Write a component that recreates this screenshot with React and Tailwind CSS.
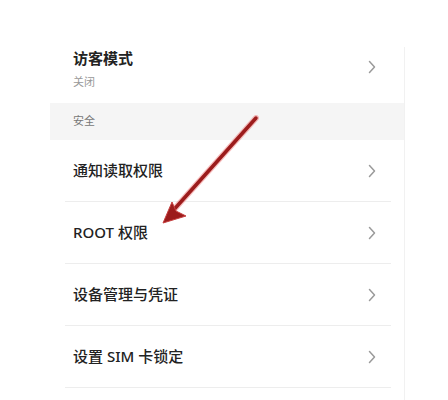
import React from 'react';

const Chevron = ({ className = '' }) => (
  <svg width="8" height="14" viewBox="0 0 8 14" className={`shrink-0 ${className}`}>
    <path d="M1.5 1.5 L6.5 7 L1.5 12.5" fill="none" stroke="#9a9a9a" strokeWidth="1.5" strokeLinecap="round" strokeLinejoin="round" />
  </svg>
);

const rows = ['通知读取权限', 'ROOT 权限', '设备管理与凭证', '设置 SIM 卡锁定'];

export default function App() {
  return (
    <div
      className="relative w-[448px] h-[400px] overflow-hidden bg-white pt-[47px]"
      style={{ fontFamily: '"Noto Sans", "Noto Sans CJK SC", sans-serif' }}
    >
      <div className="ml-[50px] w-[355px] h-[353px] border-r border-[#f1f1f1]">
        <div className="h-[56px] flex items-start pl-[23px] pr-[28px]">
          <div className="flex-1 flex flex-col pt-[1px]">
            <span className="text-[15px] leading-[20px] font-bold text-[#222]">访客模式</span>
            <span className="text-[11px] leading-[16px] mt-[6px] text-[#999]">关闭</span>
          </div>
          <Chevron className="mt-[13px]" />
        </div>
        <div className="h-[37px] bg-[#f5f5f5] flex items-center pl-[23px]">
          <span className="text-[11px] text-[#777]">安全</span>
        </div>
        {rows.map((r) => (
          <div key={r} className="ml-[15px] mr-[13px] h-[62px] flex items-center pl-[8px] pr-[15px] border-b border-[#ededed]">
            <span className="flex-1 text-[15px] font-medium text-[#222]">{r}</span>
            <Chevron />
          </div>
        ))}
      </div>
      <svg className="absolute left-0 top-0 pointer-events-none" width="448" height="400">
        <line x1="256" y1="118" x2="170" y2="214" stroke="#f07a7a" strokeWidth="6" strokeLinecap="round" opacity="0.5" />
        <line x1="256" y1="118" x2="170" y2="214" stroke="#9c1c1c" strokeWidth="3.5" strokeLinecap="round" />
        <path d="M163 223 L172 202 L176 211 L186 216 Z" fill="#9c1c1c" stroke="#c64040" strokeWidth="1" strokeLinejoin="round" />
      </svg>
    </div>
  );
}
